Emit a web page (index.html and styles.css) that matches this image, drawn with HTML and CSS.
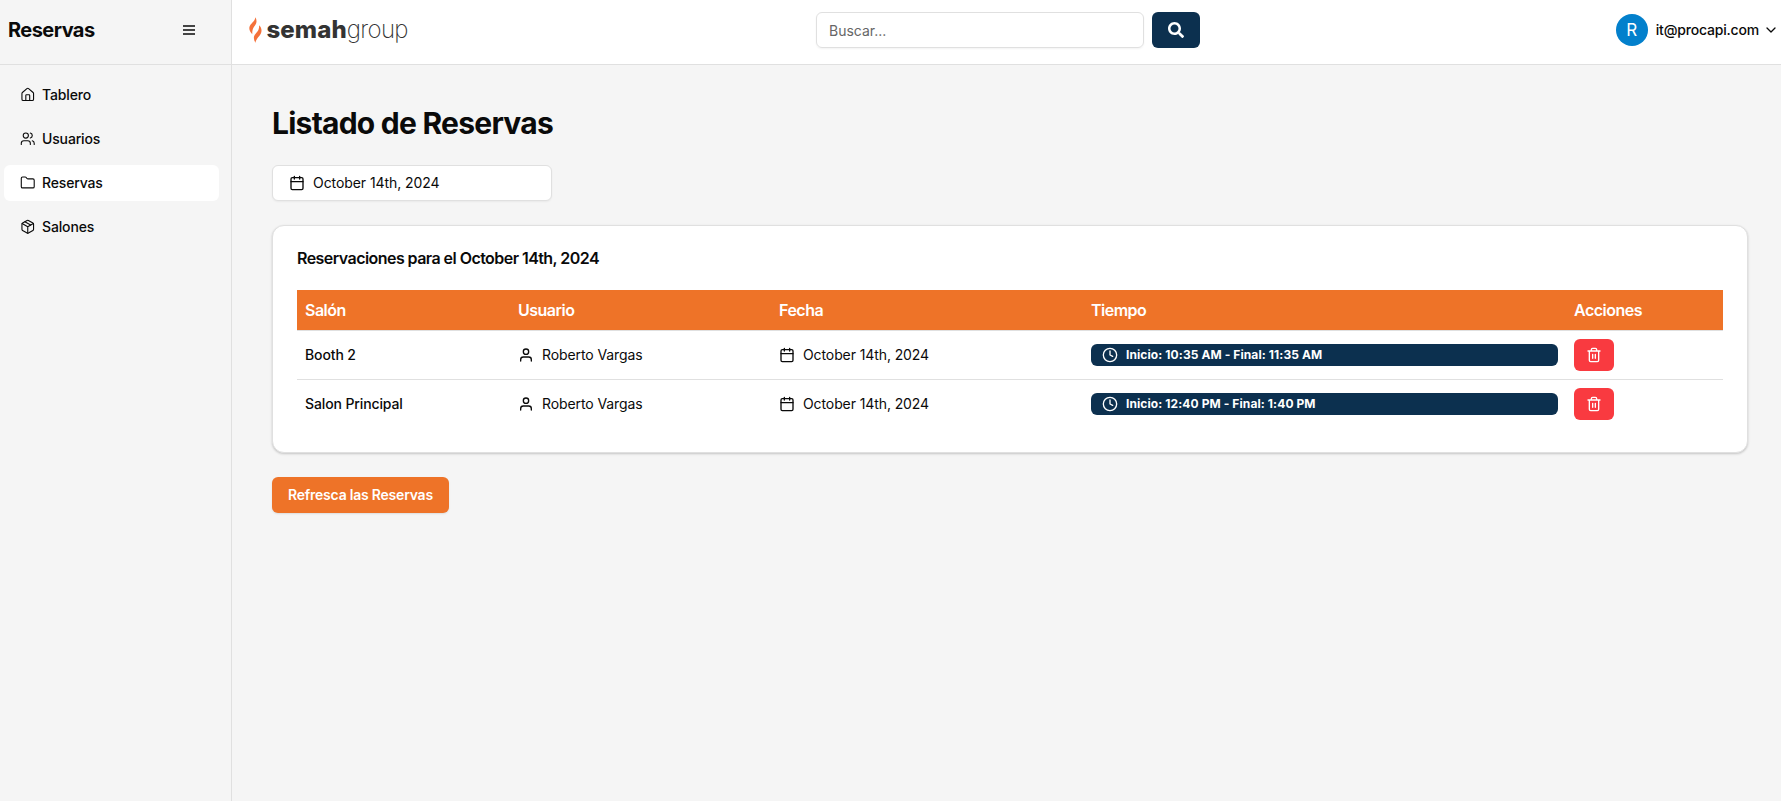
FILE: index.html
```html
<!DOCTYPE html>
<html lang="es">
<head>
<meta charset="utf-8">
<title>Reservas</title>
<link rel="stylesheet" href="styles.css">
</head>
<body>
<svg class="sprite" aria-hidden="true">
  <symbol id="calendar" viewBox="0 0 24 24"><path d="M8 2v4M16 2v4M3 10h18"/><rect x="3" y="4" width="18" height="18" rx="2"/></symbol>
  <symbol id="user" viewBox="0 0 24 24"><circle cx="12" cy="7" r="4"/><path d="M20 21v-2a4 4 0 0 0-4-4H8a4 4 0 0 0-4 4v2"/></symbol>
  <symbol id="clock" viewBox="0 0 24 24"><circle cx="12" cy="12" r="10"/><path d="M12 6v6l4 2"/></symbol>
  <symbol id="trash" viewBox="0 0 24 24"><path d="M3 6h18M19 6v14a2 2 0 0 1-2 2H7a2 2 0 0 1-2-2V6M8 6V4a2 2 0 0 1 2-2h4a2 2 0 0 1 2 2v2M10 11v6M14 11v6"/></symbol>
</svg>
<div class="app">
  <aside class="sidebar">
    <div class="sidebar-head">
      <h2 class="sidebar-title">Reservas</h2>
      <svg class="icon menu" viewBox="0 0 16 16"><path d="M2 4h12M2 8h12M2 12h12"/></svg>
    </div>
    <nav class="nav">
      <a class="nav-item"><svg class="icon nav-icon" viewBox="0 0 24 24"><path d="M15 21v-8a1 1 0 0 0-1-1h-4a1 1 0 0 0-1 1v8"/><path d="M3 10a2 2 0 0 1 .709-1.528l7-5.999a2 2 0 0 1 2.582 0l7 5.999A2 2 0 0 1 21 10v9a2 2 0 0 1-2 2H5a2 2 0 0 1-2-2z"/></svg>Tablero</a>
      <a class="nav-item"><svg class="icon nav-icon" viewBox="0 0 24 24"><path d="M16 21v-2a4 4 0 0 0-4-4H6a4 4 0 0 0-4 4v2"/><circle cx="9" cy="7" r="4"/><path d="M22 21v-2a4 4 0 0 0-3-3.87M16 3.13a4 4 0 0 1 0 7.75"/></svg>Usuarios</a>
      <a class="nav-item active"><svg class="icon nav-icon" viewBox="0 0 24 24"><path d="M20 20a2 2 0 0 0 2-2V8a2 2 0 0 0-2-2h-7.900a2 2 0 0 1-1.690-.9L9.600 3.900A2 2 0 0 0 7.930 3H4a2 2 0 0 0-2 2v13a2 2 0 0 0 2 2Z"/></svg>Reservas</a>
      <a class="nav-item"><svg class="icon nav-icon" viewBox="0 0 24 24"><path d="m7.500 4.270 9 5.150"/><path d="M21 8a2 2 0 0 0-1-1.730l-7-4a2 2 0 0 0-2 0l-7 4A2 2 0 0 0 3 8v8a2 2 0 0 0 1 1.730l7 4a2 2 0 0 0 2 0l7-4A2 2 0 0 0 21 16Z"/><path d="m3.300 7 8.700 5 8.700-5M12 22V12"/></svg>Salones</a>
    </nav>
  </aside>
  <div class="page">
    <header class="topbar">
      <div class="logo">
        <svg class="flame" viewBox="0 0 13 26"><path d="M6.500 .2C7.500 2.500 7.900 4.500 7.100 6.500C6.200 8.800 4.300 10.200 3.700 12.400C3.300 13.900 3.200 15.300 3.300 17.200C1.100 14.900 0 12.600 .4 10.200C1 6.600 5.900 4.600 6.500 .2Z"/><path d="M10.200 8.200C12.300 10.500 12.900 12.800 12.300 15.200C11.500 18.800 7.300 21 6.400 25.700C4.900 23.500 4.500 21.100 5.200 19C6 16.700 8.400 15.100 9.400 12.900C10 11.600 10.200 10 10.200 8.200Z"/></svg>
        <span class="logo-text"><b>semah</b><span class="logo-light">group</span></span>
      </div>
      <form class="search">
        <div class="search-field">Buscar...</div>
        <div class="search-btn"><svg class="search-icon" viewBox="0 0 512 512"><path d="M505 442.700 405.300 343c-4.500-4.500-10.600-7-17-7H372c27.600-35.300 44-79.700 44-128C416 93.100 322.900 0 208 0S0 93.100 0 208s93.100 208 208 208c48.300 0 92.700-16.400 128-44v16.300c0 6.400 2.500 12.500 7 17l99.700 99.700c9.400 9.400 24.600 9.400 33.900 0l28.300-28.300c9.400-9.400 9.400-24.600.1-34zM208 336c-70.700 0-128-57.200-128-128 0-70.700 57.200-128 128-128 70.700 0 128 57.200 128 128 0 70.700-57.200 128-128 128z"/></svg></div>
      </form>
      <div class="account">
        <span class="avatar">R</span>
        <span class="email">it@procapi.com</span>
        <svg class="icon chevron" viewBox="0 0 10 6"><path d="m1 1 4 4 4-4"/></svg>
      </div>
    </header>
    <main class="content">
      <h1 class="title">Listado de Reservas</h1>
      <div class="date-picker"><svg class="icon"><use href="#calendar"/></svg>October 14th, 2024</div>
      <section class="card">
        <h3 class="card-title">Reservaciones para el October 14th, 2024</h3>
        <div class="row head"><div>Salón</div><div>Usuario</div><div>Fecha</div><div>Tiempo</div><div>Acciones</div></div>
        <div class="row">
          <div class="room">Booth 2</div>
          <div class="cell"><svg class="icon"><use href="#user"/></svg>Roberto Vargas</div>
          <div class="cell"><svg class="icon"><use href="#calendar"/></svg>October 14th, 2024</div>
          <div><span class="badge"><svg class="icon"><use href="#clock"/></svg>Inicio: 10:35 AM - Final: 11:35 AM</span></div>
          <div><span class="delete"><svg class="icon"><use href="#trash"/></svg></span></div>
        </div>
        <div class="row">
          <div class="room">Salon Principal</div>
          <div class="cell"><svg class="icon"><use href="#user"/></svg>Roberto Vargas</div>
          <div class="cell"><svg class="icon"><use href="#calendar"/></svg>October 14th, 2024</div>
          <div><span class="badge"><svg class="icon"><use href="#clock"/></svg>Inicio: 12:40 PM - Final: 1:40 PM</span></div>
          <div><span class="delete"><svg class="icon"><use href="#trash"/></svg></span></div>
        </div>
      </section>
      <div class="refresh">Refresca las Reservas</div>
    </main>
  </div>
</div>
</body>
</html>
```
FILE: styles.css
```css
* { box-sizing: border-box; }
body { margin: 0; font: 400 14px/20px Inter, sans-serif; letter-spacing: -0.07px; color: #0a0a0a; background: #f5f5f5; }
h1, h2, h3 { margin: 0; }
.sprite { display: none; }
.icon { width: 16px; height: 16px; flex: none; fill: none; stroke: currentColor; stroke-width: 2; stroke-linecap: round; stroke-linejoin: round; }
.app { display: flex; height: 801px; overflow: hidden; }
.sidebar { width: 232px; flex: none; border-right: 1px solid #e0e0e0; }
.sidebar-head { height: 65px; padding: 0 34px 5px 8px; display: flex; align-items: center; justify-content: space-between; border-bottom: 1px solid #e0e0e0; }
.sidebar-title { font-size: 20px; line-height: 28px; font-weight: 700; letter-spacing: -0.55px; }
.menu { stroke-width: 1.5; stroke-linecap: butt; }
.nav { display: flex; flex-direction: column; gap: 8px; padding: 12px 12px 0 4px; }
.nav-item { height: 36px; display: flex; align-items: center; gap: 7px; padding: 0 15.500px; border-radius: 6px; font-weight: 500; letter-spacing: -0.15px; }
.nav-icon { width: 15.500px; height: 15.500px; stroke-width: 1.700; }
.active { background: #fff; }
.page { flex: 1; min-width: 0; }
.topbar { height: 65px; padding: 0 5px 5px 17px; display: flex; align-items: center; background: #fff; border-bottom: 1px solid #e0e0e0; }
.logo { display: flex; align-items: center; gap: 4.500px; width: 567px; color: #333; }
.flame { width: 13px; height: 26px; fill: #f4713a; }
.logo-text { font-size: 24px; line-height: 28px; letter-spacing: -0.65px; }
.logo-text b { font-weight: 800; letter-spacing: 0.100px; }
.logo-light { font-weight: 200; }
.search { display: flex; gap: 8px; }
.search-field { width: 328px; height: 36px; border: 1px solid #e0e0e0; border-radius: 6px; padding: 8px 12px; color: #666; letter-spacing: 0; box-shadow: 0 1px 2px rgba(0,0,0,.05); }
.search-btn { width: 48px; height: 36px; border-radius: 6px; background: #0c304f; display: flex; align-items: center; justify-content: center; }
.search-icon { width: 16px; height: 16px; fill: #fff; }
.account { margin-left: auto; display: flex; align-items: center; }
.avatar { width: 32px; height: 32px; border-radius: 50%; background: #0380cc; color: #fff; font-size: 17px; display: flex; align-items: center; justify-content: center; margin-right: 8px; }
.email { font-weight: 500; letter-spacing: -0.19px; margin-right: 7px; }
.chevron { width: 10px; height: 6px; stroke-width: 1.3; }
.content { padding: 40px 33px 0 40px; }
.title { font-size: 30px; line-height: 36px; font-weight: 700; letter-spacing: -0.75px; margin-bottom: 24px; }
.date-picker { width: 280px; height: 36px; display: flex; align-items: center; gap: 8px; padding: 0 16px; background: #fff; border: 1px solid #e0e0e0; border-radius: 6px; box-shadow: 0 1px 2px rgba(0,0,0,.05); }
.card { margin-top: 24px; padding: 24px; height: 228px; background: #fff; border: 1px solid #e0e0e0; border-radius: 12px; box-shadow: 0 1px 3px rgba(0,0,0,.1), 0 1px 2px rgba(0,0,0,.1); }
.card-title { font-size: 16px; line-height: 16px; font-weight: 600; letter-spacing: -0.55px; margin-bottom: 24px; }
.row { display: grid; grid-template-columns: 213px 261px 312px 483px 1fr; align-items: center; height: 49px; border-bottom: 1px solid #e0e0e0; }
.row:last-child { height: 48px; border-bottom: 0; }
.row > div { padding: 0 8px; }
.head { height: 41px; background: #ee7328; background-clip: padding-box; color: #fff; font-size: 16px; font-weight: 600; letter-spacing: -0.5px; }
.room { font-weight: 500; letter-spacing: -0.12px; }
.cell { display: flex; align-items: center; gap: 8px; letter-spacing: -0.1px; }
.badge { display: flex; align-items: center; gap: 8px; height: 22px; padding: 0 11px; border-radius: 6px; background: #0c304f; color: #fff; font-size: 12px; line-height: 16px; font-weight: 700; letter-spacing: 0.09px; }
.delete { width: 40px; height: 32px; display: flex; align-items: center; justify-content: center; border-radius: 6px; background: #f93a40; color: #fff; }
.refresh { width: 177px; height: 36px; margin-top: 24px; padding: 8px 16px; border-radius: 6px; background: #ee7328; color: #fff; font-weight: 600; letter-spacing: -0.22px; white-space: nowrap; box-shadow: 0 1px 2px rgba(0,0,0,.1); }
```
